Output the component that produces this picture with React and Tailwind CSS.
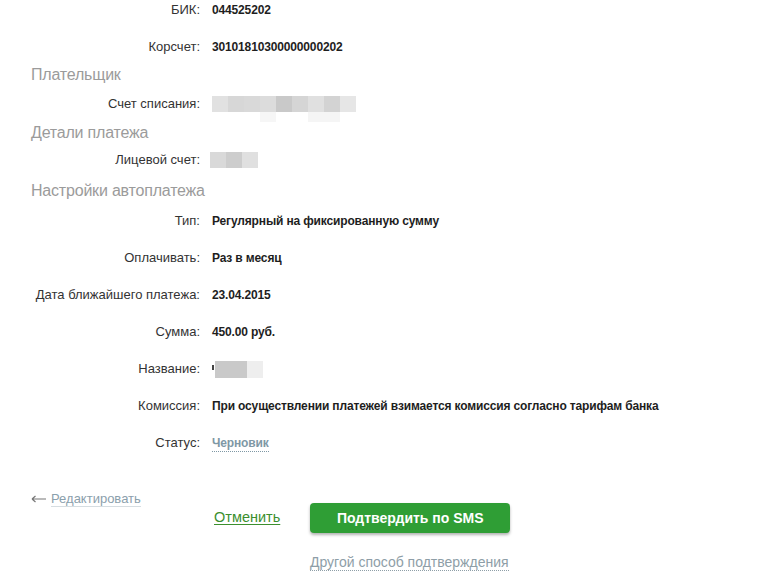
import React from 'react';

const font = { fontFamily: '"Liberation Sans", Arial, sans-serif' };

const Row = ({ label, children, className = '' }) => (
  <div className={`grid grid-cols-[200px_1fr] gap-[12px] items-center ${className}`}>
    <div className="text-right text-[13px] text-[#333]">{label}</div>
    <div className="text-[12px] font-bold text-[#1e1e1e] tracking-[-0.15px]">{children}</div>
  </div>
);

const Heading = ({ children, className = '' }) => (
  <div className={`pl-[31px] text-[16px] leading-[20px] tracking-[-0.2px] text-[#9b9b9b] ${className}`}>{children}</div>
);

const Blur = ({ cells }) => (
  <div className="flex">
    {cells.map((c, i) => (
      <div key={i} className="h-[16px]" style={{ width: c[1], background: c[0] }} />
    ))}
  </div>
);

const App = () => {
  return (
    <div className="w-[760px] h-[574px] bg-white overflow-hidden relative" style={font}>
      <Row label="БИК:" className="h-[20px]">044525202</Row>
      <Row label="Корсчет:" className="h-[20px] mt-[17px]">30101810300000000202</Row>

      <Heading className="mt-[8px]">Плательщик</Heading>
      <Row label="Счет списания:" className="h-[20px] mt-[9px]">
        <div className="relative h-[16px]">
          <Blur cells={[['#e1e1e1', 16], ['#d7d7d7', 16], ['#d9d9d9', 16], ['#dcdcdc', 16], ['#c9c9c9', 16], ['#d5d5d5', 16], ['#e0e0e0', 16], ['#d3d3d3', 16], ['#e6e6e6', 16]]} />
          <div className="absolute left-[48px] top-[16px] w-[16px] h-[10px] bg-[#f6f6f6]" />
          <div className="absolute left-[96px] top-[16px] w-[32px] h-[10px] bg-[#f5f5f5]" />
        </div>
      </Row>

      <Heading className="mt-[9px]">Детали платежа</Heading>
      <Row label="Лицевой счет:" className="h-[20px] mt-[7px]">
        <div className="-ml-[2px]">
          <Blur cells={[['#d9d9d9', 16], ['#cdcdcd', 16], ['#e0e0e0', 16]]} />
        </div>
      </Row>

      <Heading className="mt-[11px]">Настройки автоплатежа</Heading>
      <div className="mt-[10px]">
        <Row label="Тип:" className="h-[20px]">Регулярный на фиксированную сумму</Row>
        <Row label="Оплачивать:" className="h-[20px] mt-[17px]">Раз в месяц</Row>
        <Row label="Дата ближайшего платежа:" className="h-[20px] mt-[17px]">23.04.2015</Row>
        <Row label="Сумма:" className="h-[20px] mt-[17px]">450.00 руб.</Row>
        <Row label="Название:" className="h-[20px] mt-[17px]">
          <div className="flex items-center">
            <div className="w-[3px] h-[17px] flex flex-col items-start pt-[4px]">
              <div className="w-[2px] h-[5px] bg-[#444]" />
            </div>
            <div className="h-[17px] w-[32px] bg-[#c9c9c9]" />
            <div className="h-[17px] w-[16px] bg-[#eeeeee]" />
          </div>
        </Row>
        <Row label="Комиссия:" className="h-[20px] mt-[17px]">
          При осуществлении платежей взимается комиссия согласно тарифам банка
        </Row>
        <Row label="Статус:" className="h-[20px] mt-[17px]">
          <span className="text-[#7f98a5] border-b border-dotted border-[#7f98a5] pb-[1px]">Черновик</span>
        </Row>
      </div>

      <div className="mt-[38px] pl-[31px] flex items-center h-[16px] text-[13px]">
        <svg width="16" height="8" viewBox="0 0 16 8" className="mr-[4px]">
          <path d="M1 4H15M1 4L4.5 1M1 4L4.5 7" stroke="#777" strokeWidth="1.2" fill="none" />
        </svg>
        <span className="text-[#8ba0ac] border-b border-[#d6dde1] leading-[15px]">Редактировать</span>
      </div>

      <div className="flex items-center pl-[214px] mt-[-4px]">
        <span className="text-[14.5px] text-[#3c8f2e] underline underline-offset-2 decoration-[#3c8f2e]">Отменить</span>
        <button className="ml-[30px] w-[200px] h-[30px] rounded-[4px] bg-[#2f9e35] text-white text-[14px] font-bold shadow-[0_2px_3px_rgba(0,0,0,0.3)]">
          Подтвердить по SMS
        </button>
      </div>

      <div className="pl-[310px] mt-[17px]">
        <span className="text-[14px] text-[#8e9ea7] border-b border-dotted border-[#8e9ea7]">Другой способ подтверждения</span>
      </div>
    </div>
  );
};

export default App;
